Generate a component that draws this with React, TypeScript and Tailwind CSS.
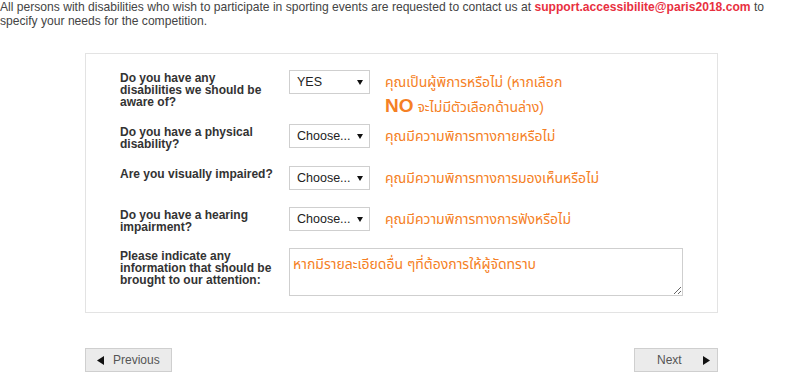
import React from 'react';

const FONT = "font-['Liberation_Sans','Noto_Sans_Thai','Noto_Sans',sans-serif]";

function FakeSelect({ value }: { value: string }) {
  return (
    <div className="flex h-[24px] w-[81px] shrink-0 items-center justify-between border border-[#cfcfcf] bg-white pl-[7px] pr-[6px] text-[12.5px] text-[#222]">
      <span>{value}</span>
      <svg width="6" height="5" viewBox="0 0 6 5" className="mt-px">
        <path d="M0 0 L6 0 L3 5 Z" fill="#111" />
      </svg>
    </div>
  );
}

function Row({
  label,
  value,
  hint,
  className,
}: {
  label: React.ReactNode;
  value: string;
  hint: React.ReactNode;
  className?: string;
}) {
  return (
    <div className={`flex items-start ${className ?? ''}`}>
      <div className="w-[158px] shrink-0 pt-[2px] text-[12px] font-bold leading-[12px] text-[#333]">
        {label}
      </div>
      <div className="ml-[11px]">
        <FakeSelect value={value} />
      </div>
      <div className="ml-[15px] text-[14px] leading-[24px] text-[#f58025]">{hint}</div>
    </div>
  );
}

export default function App() {
  return (
    <div className={`min-h-[391px] w-[800px] bg-white ${FONT}`}>
      {/* Intro */}
      <p className="pr-[12px] text-[12.1px] leading-[14px] text-[#444]">
        All persons with disabilities who wish to participate in sporting events are requested to contact us at{' '}
        <span className="font-bold text-[#e8303f]">support.accessibilite@paris2018.com</span> to specify your needs
        for the competition.
      </p>

      {/* Form panel */}
      <div className="ml-[85px] mt-[25px] w-[633px] border border-[#e3e3e3] pb-[16px] pl-[34px] pt-[16px]">
        <Row
          className="h-[54px]"
          label="Do you have any disabilities we should be aware of?"
          value="YES"
          hint={
            <>
              คุณเป็นผู้พิการหรือไม่ (หากเลือก
              <br />
              <span className="text-[19px] font-bold">NO</span> จะไม่มีตัวเลือกด้านล่าง)
            </>
          }
        />
        <Row
          className="h-[42px]"
          label="Do you have a physical disability?"
          value="Choose..."
          hint="คุณมีความพิการทางกายหรือไม่"
        />
        <Row
          className="h-[41px]"
          label="Are you visually impaired?"
          value="Choose..."
          hint="คุณมีความพิการทางการมองเห็นหรือไม่"
        />
        <Row
          className="h-[41px]"
          label="Do you have a hearing impairment?"
          value="Choose..."
          hint="คุณมีความพิการทางการฟังหรือไม่"
        />
        <div className="flex items-start">
          <div className="w-[158px] shrink-0 pt-[2px] text-[12px] font-bold leading-[12px] text-[#333]">
            Please indicate any information that should be brought to our attention:
          </div>
          <textarea
            defaultValue="หากมีรายละเอียดอื่น ๆที่ต้องการให้ผู้จัดทราบ"
            className={`ml-[11px] block h-[48px] w-[394px] border border-[#cfcfcf] px-[3px] pt-[5px] text-[14px] leading-[20px] text-[#f58025] outline-none ${FONT}`}
          />
        </div>
      </div>

      {/* Navigation */}
      <div className="ml-[85px] mt-[35px] flex w-[633px] justify-between text-[12px] text-[#555]">
        <button className="flex h-[24px] w-[87px] items-center border border-[#cfcfcf] bg-[#ebebeb] pl-[11px]">
          <svg width="7" height="9" viewBox="0 0 7 9">
            <path d="M7 0 L7 9 L0 4.5 Z" fill="#111" />
          </svg>
          <span className="ml-[9px]">Previous</span>
        </button>
        <button className="flex h-[24px] w-[84px] items-center justify-between border border-[#cfcfcf] bg-[#ebebeb] pl-[22px] pr-[7px]">
          <span>Next</span>
          <svg width="7" height="9" viewBox="0 0 7 9">
            <path d="M0 0 L0 9 L7 4.5 Z" fill="#111" />
          </svg>
        </button>
      </div>
    </div>
  );
}
